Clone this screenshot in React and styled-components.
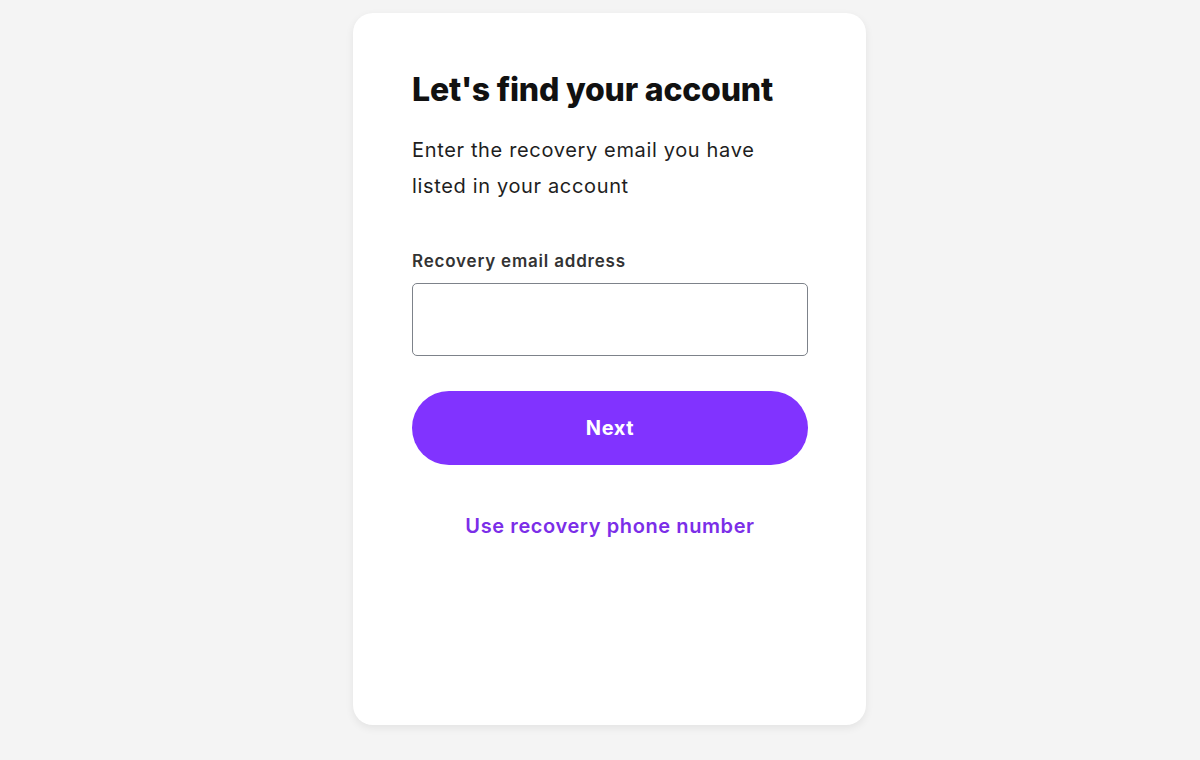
import React from "react";
import styled, { createGlobalStyle } from "styled-components";

const Global = createGlobalStyle`
  html, body { margin: 0; padding: 0; background: #f4f4f4; }
  body { font-family: "Inter", "Liberation Sans", sans-serif; -webkit-font-smoothing: antialiased; }
  * { box-sizing: border-box; }
`;

const Page = styled.div`
  width: 1200px;
  height: 760px;
  display: flex;
  justify-content: center;
  align-items: flex-start;
  padding-top: 13px;
  padding-left: 19px;
`;

const Card = styled.div`
  width: 513px;
  height: 712px;
  background: #fff;
  border-radius: 20px;
  box-shadow: 0 3px 8px rgba(0, 0, 0, 0.07);
  padding: 55px 58px 0 59px;
  display: flex;
  flex-direction: column;
`;

const Title = styled.h1`
  margin: 0;
  font-size: 32px;
  font-weight: 800;
  letter-spacing: -0.2px;
  color: #111;
  line-height: 44px;
`;

const Intro = styled.p`
  margin: 20px 0 0;
  font-size: 20px;
  line-height: 36px;
  color: #1e1e1e;
  font-weight: 400;
  letter-spacing: 0.65px;
`;

const Label = styled.label`
  margin-top: 45px;
  font-size: 17px;
  font-weight: 600;
  color: #333;
  line-height: 24px;
  letter-spacing: 0.8px;
`;

const Input = styled.input`
  margin-top: 10px;
  width: 100%;
  height: 73px;
  border: 1px solid #7d828a;
  border-radius: 5px;
  font-size: 18px;
  padding: 0 16px;
  outline: none;
`;

const Button = styled.button`
  margin-top: 35px;
  width: 100%;
  height: 74px;
  border: none;
  border-radius: 37px;
  background: #8133ff;
  color: #fff;
  font-family: inherit;
  font-size: 20px;
  font-weight: 700;
  letter-spacing: 0.6px;
  cursor: pointer;
`;

const Link = styled.a`
  margin-top: 49px;
  align-self: center;
  font-size: 20px;
  font-weight: 600;
  color: #7b2ee8;
  text-decoration: none;
  letter-spacing: 0.6px;
  line-height: 24px;
  cursor: pointer;
`;

export default function App() {
  return (
    <>
      <Global />
      <Page>
        <Card>
          <Title>Let's find your account</Title>
          <Intro>
            Enter the recovery email you have
            <br />
            listed in your account
          </Intro>
          <Label htmlFor="email">Recovery email address</Label>
          <Input id="email" type="email" />
          <Button>Next</Button>
          <Link>Use recovery phone number</Link>
        </Card>
      </Page>
    </>
  );
}
